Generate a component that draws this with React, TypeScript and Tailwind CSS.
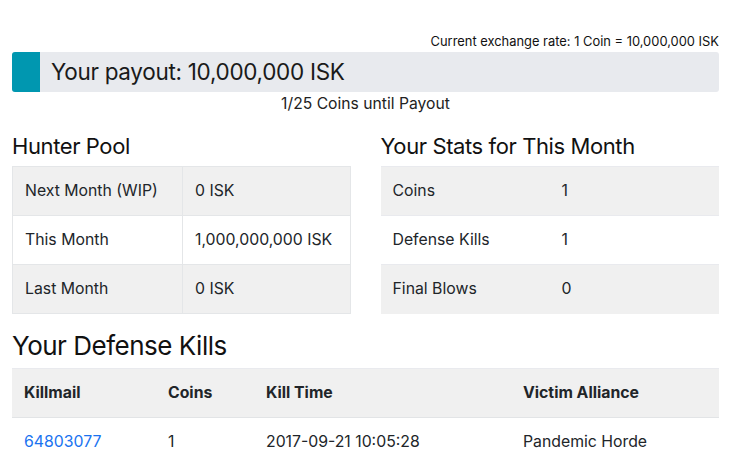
import React from "react";

const font = { fontFamily: "Inter, 'Helvetica Neue', Arial, sans-serif" };

export default function App() {
  const pool = [
    ["Next Month (WIP)", "0 ISK"],
    ["This Month", "1,000,000,000 ISK"],
    ["Last Month", "0 ISK"],
  ];
  const stats = [
    ["Coins", "1"],
    ["Defense Kills", "1"],
    ["Final Blows", "0"],
  ];
  return (
    <div className="w-[731px] h-[468px] overflow-hidden bg-white text-[#212529]" style={font}>
      <div className="px-3 pt-[34px]">
        <div className="text-right text-[12.9px] leading-[16px] text-[#111]">
          Current exchange rate: 1 Coin = 10,000,000 ISK
        </div>
        <div className="mt-[2px] flex h-[40px] rounded-[3px] bg-[#e8eaee] overflow-hidden">
          <div className="w-[28px] bg-[#0097b0]" />
          <div className="pl-[11px] flex items-center text-[22.5px] font-normal tracking-[-0.3px] text-[#1a1a1a]">
            Your payout: 10,000,000 ISK
          </div>
        </div>
        <div className="text-center text-[15.7px] leading-[24px] text-[#222]">
          1/25 Coins until Payout
        </div>

        <div className="flex gap-[30px] mt-[14px]">
          <div className="w-[339px]">
            <h2 className="text-[22px] leading-[32px] tracking-[-0.4px] text-[#111] mb-[4px]">Hunter Pool</h2>
            <table className="w-full border-collapse text-[15.8px]">
              <tbody>
                {pool.map((r, i) => (
                  <tr key={i} className={i % 2 === 0 ? "bg-[#f0f0f0]" : "bg-white"}>
                    <td className="border border-[#e4e6e8] px-3 h-[49px] w-[170px]">{r[0]}</td>
                    <td className="border border-[#e4e6e8] px-3 h-[49px]">{r[1]}</td>
                  </tr>
                ))}
              </tbody>
            </table>
          </div>
          <div className="w-[339px]">
            <h2 className="text-[22px] leading-[32px] tracking-[-0.4px] text-[#111] mb-[4px]">Your Stats for This Month</h2>
            <table className="w-full border-collapse text-[15.8px]">
              <tbody>
                {stats.map((r, i) => (
                  <tr key={i} className={i % 2 === 0 ? "bg-[#f0f0f0]" : "bg-white"}>
                    <td className="border-t border-[#e9eaee] px-3 h-[49px] w-[169px]">{r[0]}</td>
                    <td className="border-t border-[#e9eaee] px-3 h-[49px]">{r[1]}</td>
                  </tr>
                ))}
              </tbody>
            </table>
          </div>
        </div>

        <h2 className="mt-[14px] text-[26px] leading-[36px] tracking-[-0.5px] text-[#111] mb-[4px]">Your Defense Kills</h2>
        <table className="w-full border-collapse text-[15.8px]">
          <thead>
            <tr className="bg-[#f0f0f0]">
              <th className="text-left font-bold px-3 h-[49px] w-[144px] border-t border-[#e9eaee]">Killmail</th>
              <th className="text-left font-bold px-3 h-[49px] w-[98px] border-t border-[#e9eaee]">Coins</th>
              <th className="text-left font-bold px-3 h-[49px] w-[257px] border-t border-[#e9eaee]">Kill Time</th>
              <th className="text-left font-bold px-3 h-[49px] border-t border-[#e9eaee]">Victim Alliance</th>
            </tr>
          </thead>
          <tbody>
            <tr>
              <td className="px-3 h-[49px] border-t border-[#e2e4e6] text-[#1a73f0]">64803077</td>
              <td className="px-3 h-[49px] border-t border-[#e2e4e6]">1</td>
              <td className="px-3 h-[49px] border-t border-[#e2e4e6]">2017-09-21 10:05:28</td>
              <td className="px-3 h-[49px] border-t border-[#e2e4e6]">Pandemic Horde</td>
            </tr>
          </tbody>
        </table>
      </div>
    </div>
  );
}
